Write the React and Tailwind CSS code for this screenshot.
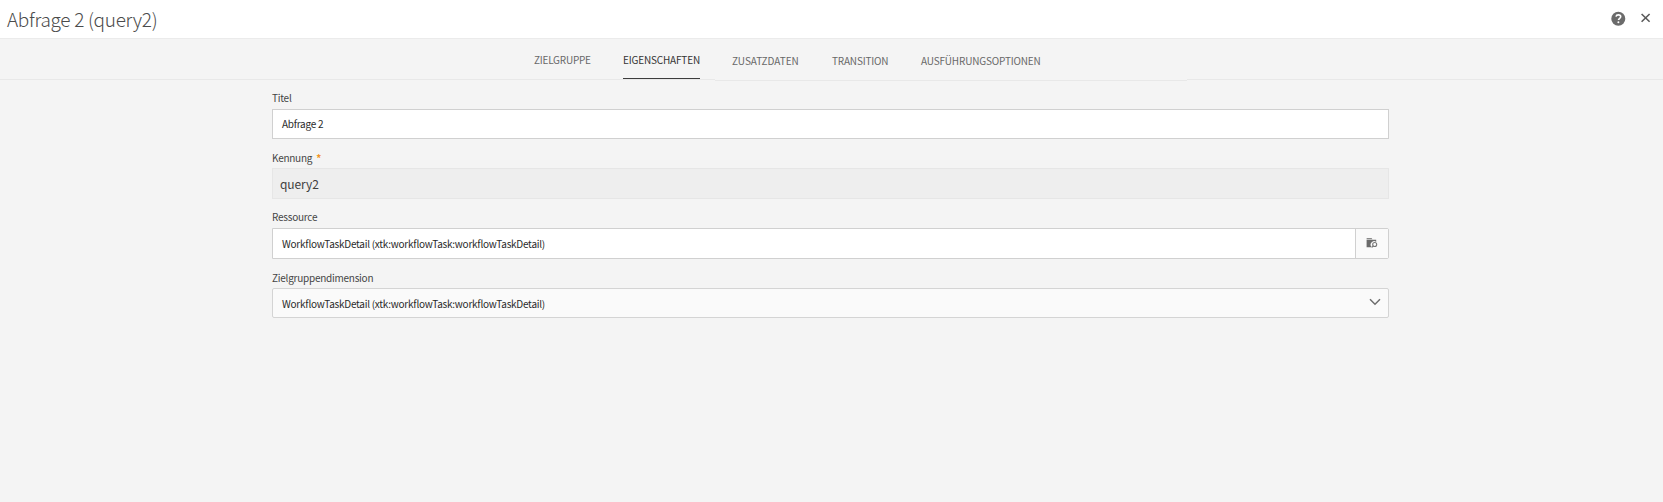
import React from "react";

const tabs = [
  { label: "ZIELGRUPPE", cell: "w-[56px] mr-[33px] pt-0 tracking-[-0.22px]" },
  { label: "EIGENSCHAFTEN", cell: "w-[77px] mr-[32px] pt-0 tracking-[-0.17px]", active: true },
  { label: "ZUSATZDATEN", cell: "w-[67px] mr-[33px] pt-px tracking-[-0.05px]" },
  { label: "TRANSITION", cell: "w-[57px] mr-[32px] pt-px tracking-[-0.17px]" },
  { label: "AUSFÜHRUNGSOPTIONEN", cell: "w-[120px] pt-px tracking-[-0.17px]" },
];

function Header() {
  return (
    <header className="flex h-[39px] items-start justify-between border-b border-[#ebebeb] bg-white pl-[7px] pr-[10px]">
      <h1 className="mt-[5px] whitespace-nowrap text-[19px] leading-[28px] font-light tracking-[-0.3px] text-[#4b4b4b]">
        Abfrage 2 (query2)
      </h1>
      <div className="flex items-start gap-[13px] pt-[11px]">
        <button aria-label="Hilfe" className="h-[15px] w-[15px]">
          <svg viewBox="0 0 15 15" className="block h-[15px] w-[15px]">
            <circle cx="7.3" cy="7.7" r="7" fill="#6b6b6b" />
            <path d="M5 5.7C5.2 4.5 6.1 3.9 7.4 3.9c1.4 0 2.3.7 2.3 1.8 0 1.5-2.2 1.7-2.2 3.4" fill="none" stroke="#fff" strokeWidth="1.6" />
            <circle cx="7.4" cy="11.2" r="1" fill="#fff" />
          </svg>
        </button>
        <button aria-label="Schließen" className="h-[14px] w-[14px]">
          <svg viewBox="0 0 14 14" className="block h-[14px] w-[14px]">
            <path d="M2.6 3l8 7.8M10.6 3l-8 7.8" stroke="#5a5a5a" strokeWidth="1.6" fill="none" />
          </svg>
        </button>
      </div>
    </header>
  );
}

function Tabs() {
  return (
    <nav className="flex h-[42px] items-start">
      <div className="h-[41px] w-[534px] border-b border-[#e8e8e8]" />
      <div className="flex items-start">
        {tabs.map((t) => (
          <div
            key={t.label}
            className={`${t.cell} h-[40px] shrink-0 whitespace-nowrap text-[10px] ${
              t.active ? "border-b border-[#3c3c3c] text-[#353535]" : "text-[#686868]"
            }`}
          >
            <div className="mt-[11px] leading-[20px]">{t.label}</div>
          </div>
        ))}
      </div>
      <div className="-ml-[507px] flex grow items-start">
        <div className="h-[41px] w-[181px] border-b border-[#e8e8e8]" />
        <div className="h-[42px] w-[472px] border-b border-[#e8e8e8]" />
        <div className="h-[41px] grow border-b border-[#e8e8e8]" />
      </div>
    </nav>
  );
}

function Label({ raised, children }) {
  return (
    <label
      className={`block h-[20px] whitespace-nowrap text-[10px] tracking-[-0.25px] text-[#444] ${
        raised ? "leading-[18px]" : "leading-[20px]"
      }`}
    >
      {children}
    </label>
  );
}

function Value({ children }) {
  return (
    <span className="whitespace-nowrap text-[10px] tracking-[-0.26px] text-[#2a2a2a] [font-feature-settings:'liga']">
      {children}
    </span>
  );
}

export default function App() {
  return (
    <div className="h-[502px] w-[1663px] overflow-hidden bg-[#f4f4f4] font-['Noto_Sans_CJK_SC','Noto_Sans',sans-serif]">
      <Header />
      <Tabs />
      <main className="ml-[272px] flex w-[1117px] flex-col pt-[8px]">
        <Label raised>Titel</Label>
        <div className="mb-[9px] flex h-[30px] items-center border border-[#d0d0d0] bg-white pb-[2px] pl-[9px]">
          <Value>Abfrage 2</Value>
        </div>
        <Label>
          Kennung <span className="ml-[2px] font-bold text-[#f29423]">*</span>
        </Label>
        <div className="mb-[9px] h-[31px] border border-[#e6e6e6] bg-[#eeeeee] pl-[7px] text-[12px] leading-[29px] tracking-[-0.1px] text-[#404040]">
          query2
        </div>
        <Label raised>Ressource</Label>
        <div className="mb-[9px] flex h-[31px] rounded-r-[2px] border border-[#d0d0d0] bg-white">
          <div className="flex grow items-center pl-[9px]">
            <Value>WorkflowTaskDetail (xtk:workflowTask:workflowTaskDetail)</Value>
          </div>
          <button aria-label="Ressource auswählen" className="w-[33px] border-l border-[#d0d0d0] bg-[#fafafa] pb-[2px] pl-[10px]">
            <svg viewBox="0 0 12 12" className="block h-[12px] w-[12px]">
              <path d="M.6 1h5l.8 1.2H.6z" fill="#8a8a8a" />
              <path d="M.6 2.8h9.6v2.1a3.2 3.2 0 0 0-4.2 5.4H.6z" fill="#6b6b6b" />
              <circle cx="8.7" cy="7.5" r="2" fill="none" stroke="#777" strokeWidth="1.1" />
              <path d="M7.2 9L5.8 10.4" stroke="#777" strokeWidth="1.2" />
            </svg>
          </button>
        </div>
        <Label>Zielgruppendimension</Label>
        <div className="flex h-[30px] items-center justify-between rounded-[2px] border border-[#d4d4d4] bg-[#fafafa] pl-[9px] pr-[7px]">
          <Value>WorkflowTaskDetail (xtk:workflowTask:workflowTaskDetail)</Value>
          <svg viewBox="0 0 12 8" className="mb-[2px] h-[8px] w-[12px]">
            <path d="M1 1.2l5 5 5-5" fill="none" stroke="#6e6e6e" strokeWidth="1.5" />
          </svg>
        </div>
      </main>
    </div>
  );
}
